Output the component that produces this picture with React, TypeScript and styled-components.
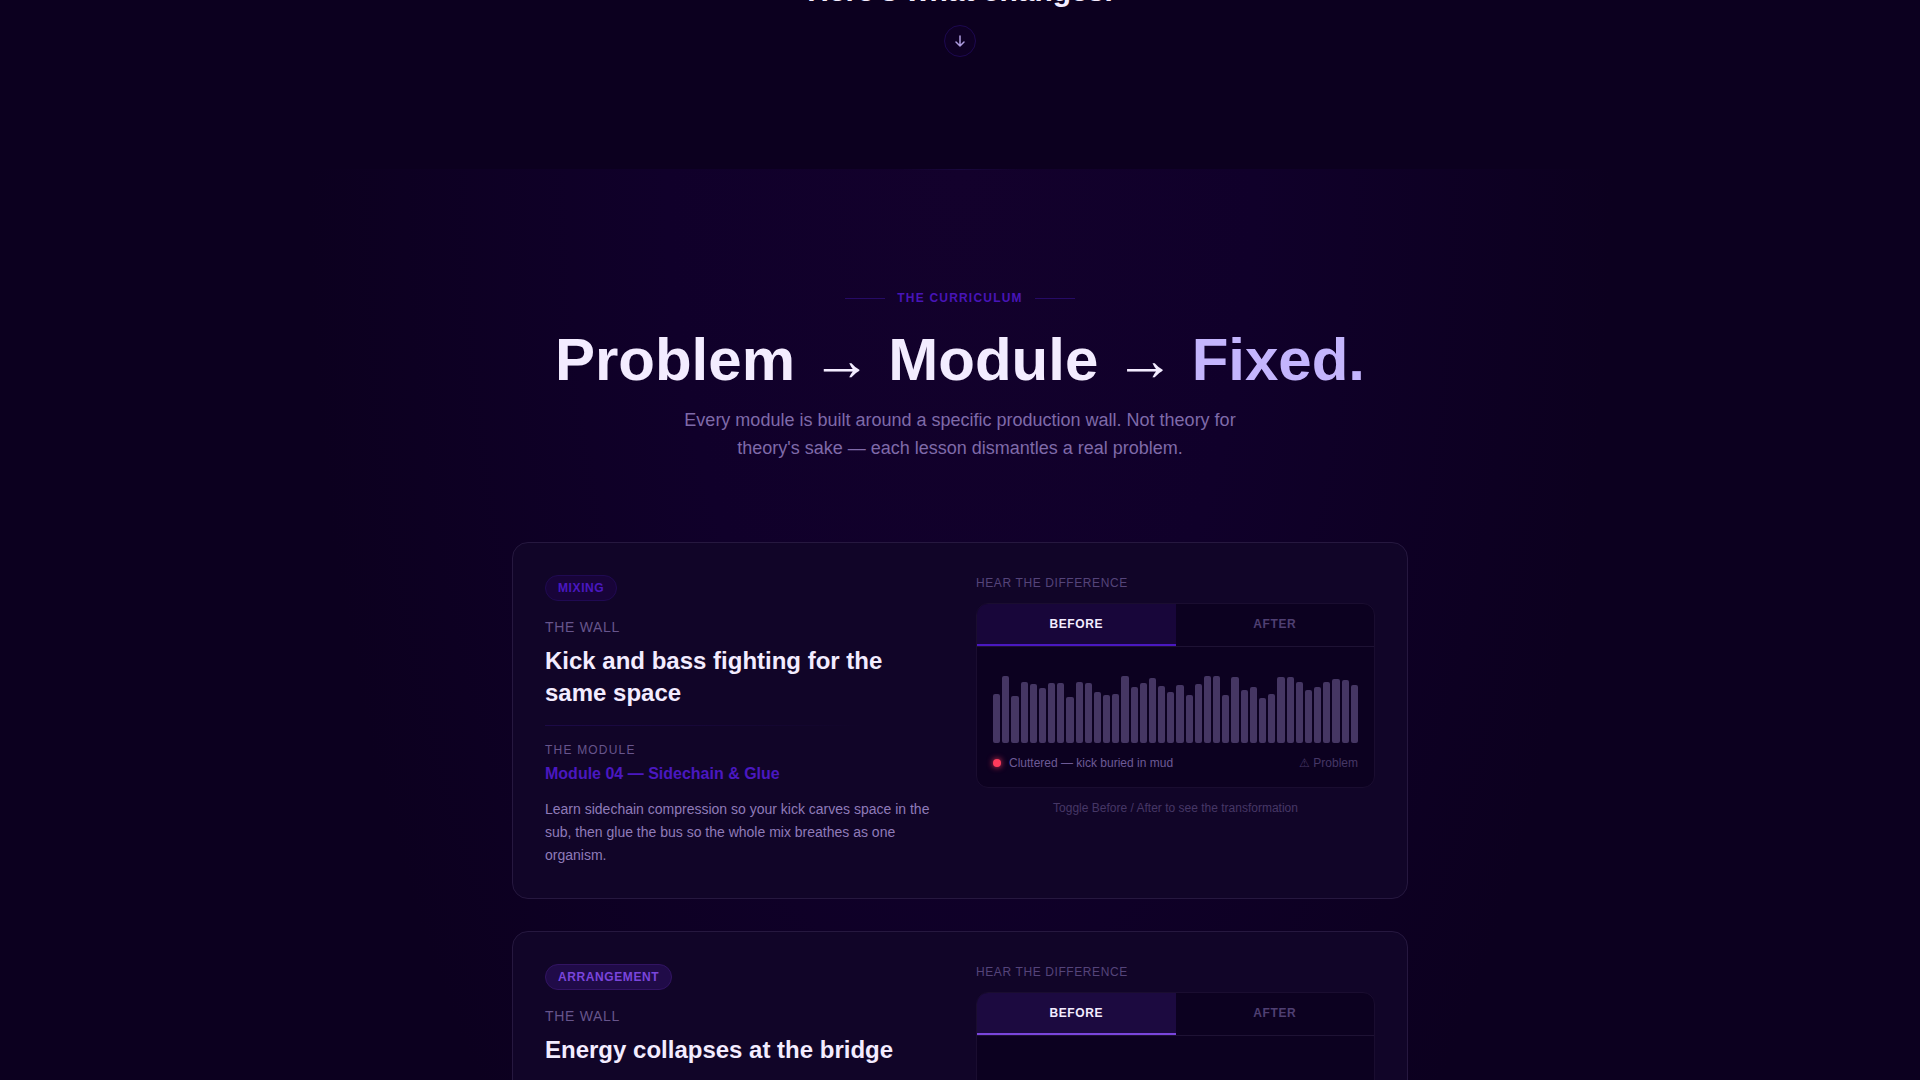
import React, { useState } from "react";
import styled, { createGlobalStyle, css } from "styled-components";

const GlobalStyle = createGlobalStyle`
  *, *::before, *::after { box-sizing: border-box; }
  body {
    margin: 0;
    background: #0c001f;
    color: #f3ecff;
    font-family: "Liberation Sans", Arial, sans-serif;
  }
  h1, h2, h3, p { margin: 0; }
  button { font-family: inherit; }
`;

const Page = styled.main`
  height: 100vh;
  overflow: hidden;
`;

const Intro = styled.section`
  display: flex;
  flex-direction: column;
  align-items: center;
  gap: 16px;
  padding-bottom: 112px;
`;

const IntroTitle = styled.h2`
  margin-top: -27px;
  font-size: 30px;
  line-height: 36px;
  font-weight: 700;
`;

const ScrollButton = styled.button`
  display: flex;
  align-items: center;
  justify-content: center;
  width: 32px;
  height: 32px;
  padding: 0;
  border: 1px solid #1d0850;
  border-radius: 50%;
  background: #0e0024;
  color: #ae9ce0;
`;

const Curriculum = styled.section`
  display: flex;
  flex-direction: column;
  align-items: center;
  padding: 0 24px 120px;
  background: radial-gradient(
    ellipse 34vw 1350px at 50% 0,
    #13012c 0%,
    #10002a 45%,
    #0c001f 100%
  );
`;

const TopRule = styled.div`
  width: 120px;
  height: 1px;
  background: linear-gradient(90deg, transparent, #1a083e, transparent);
`;

const Eyebrow = styled.p`
  display: flex;
  align-items: center;
  gap: 12px;
  margin-top: 120px;
  color: #4815b8;
  font-size: 12px;
  line-height: 16px;
  font-weight: 700;
  letter-spacing: 0.1em;

  &::before,
  &::after {
    content: "";
    width: 40px;
    height: 1px;
    background: #260b66;
  }
`;

const Headline = styled.h1`
  margin-top: 24px;
  font-size: 60px;
  line-height: 60px;
  font-weight: 700;
  text-align: center;
`;

const Highlight = styled.span`
  color: #c4b5fd;
`;

const Lead = styled.p`
  max-width: 576px;
  margin-top: 16px;
  color: #7f6aa9;
  font-size: 18px;
  line-height: 28px;
  text-align: center;
`;

const CardList = styled.div`
  display: flex;
  flex-direction: column;
  gap: 32px;
  width: 100%;
  max-width: 896px;
  margin-top: 80px;
`;

const Card = styled.article`
  display: grid;
  grid-template-columns: 1fr 1fr;
  gap: 32px;
  padding: 32px;
  border: 1px solid #26183f;
  border-radius: 16px;
  background: #110528;
`;

const Column = styled.div`
  display: flex;
  flex-direction: column;
  align-items: flex-start;
`;

type Tone = { accent: string; badge: string; badgeLine: string; tab: string };

const Badge = styled.span<{ $tone: Tone }>`
  padding: 4px 12px;
  border: 1px solid ${(p) => p.$tone.badgeLine};
  border-radius: 13px;
  background: ${(p) => p.$tone.badge};
  color: ${(p) => p.$tone.accent};
  font-size: 12px;
  line-height: 16px;
  font-weight: 700;
  letter-spacing: 0.05em;
`;

const WallLabel = styled.p`
  margin-top: 16px;
  color: #67558c;
  font-size: 14px;
  line-height: 20px;
  letter-spacing: 0.05em;
`;

const WallTitle = styled.h3`
  margin-top: 8px;
  font-size: 24px;
  line-height: 32px;
  font-weight: 700;
`;

const Divider = styled.div`
  width: 100%;
  height: 1px;
  margin: 16px 0;
  background: linear-gradient(90deg, #1c0a47, transparent 80%);
`;

const ModuleLabel = styled.p`
  color: #67558c;
  font-size: 12px;
  line-height: 16px;
  letter-spacing: 0.1em;
`;

const ModuleName = styled.p<{ $tone: Tone }>`
  margin-top: 4px;
  color: ${(p) => p.$tone.accent};
  font-size: 16px;
  line-height: 24px;
  font-weight: 700;
`;

const ModuleText = styled.p`
  margin-top: 12px;
  color: #8f7bb9;
  font-size: 14px;
  line-height: 1.625;
`;

const HearLabel = styled.p`
  color: #55447a;
  font-size: 12px;
  line-height: 16px;
  letter-spacing: 0.05em;
`;

const Player = styled.div`
  width: 100%;
  margin-top: 12px;
  border: 1px solid #1a0d30;
  border-radius: 12px;
  background: #0c0120;
  overflow: hidden;
`;

const Tabs = styled.div`
  display: grid;
  grid-template-columns: 1fr 1fr;
  border-bottom: 1px solid #1e1234;
`;

const Tab = styled.button<{ $tone: Tone; $active: boolean }>`
  padding: 12px;
  border: 0;
  border-bottom: 2px solid transparent;
  background: transparent;
  color: #4f3f72;
  font-size: 12px;
  line-height: 16px;
  font-weight: 700;
  letter-spacing: 0.05em;

  ${(p) =>
    p.$active &&
    css`
      border-bottom-color: ${p.$tone.accent};
      background: ${p.$tone.tab};
      color: #f3ecff;
    `}
`;

const PlayerBody = styled.div`
  padding: 16px;
`;

const Wave = styled.div`
  display: flex;
  align-items: flex-end;
  gap: 2px;
  height: 80px;
`;

const Bar = styled.span`
  flex: 1;
  border-radius: 2px;
  background: #453663;
`;

const Status = styled.div`
  display: flex;
  align-items: center;
  gap: 8px;
  margin-top: 12px;
  color: #6d5a96;
  font-size: 12px;
  line-height: 16px;
`;

const Dot = styled.span`
  width: 8px;
  height: 8px;
  border-radius: 50%;
  background: #ff3b5c;
  box-shadow: 0 0 6px #ff3b5c;
`;

const Verdict = styled.span`
  margin-left: auto;
  color: #463766;
`;

const Hint = styled.p`
  align-self: center;
  margin-top: 12px;
  color: #463766;
  font-size: 12px;
  line-height: 16px;
`;

type Module = {
  tag: string;
  wall: string;
  name?: string;
  text?: string;
  status?: string;
  levels: number[];
  tone: Tone;
};

const modules: Module[] = [
  {
    tag: "MIXING",
    wall: "Kick and bass fighting for the same space",
    name: "Module 04 — Sidechain & Glue",
    text: "Learn sidechain compression so your kick carves space in the sub, then glue the bus so the whole mix breathes as one organism.",
    status: "Cluttered — kick buried in mud",
    levels: [
      49, 67, 47, 61, 59, 55, 60, 60, 46, 61, 60, 51, 48, 49, 67, 56, 60, 65, 57, 51,
      58, 48, 59, 67, 67, 48, 66, 53, 56, 45, 49, 66, 66, 61, 53, 56, 61, 64, 63, 58,
    ],
    tone: { accent: "#4a18c0", badge: "#180439", badgeLine: "#200a52", tab: "#18063a" },
  },
  {
    tag: "ARRANGEMENT",
    wall: "Energy collapses at the bridge",
    levels: Array.from({ length: 40 }, (_, i) => 24 + ((i * 7) % 5)),
    tone: { accent: "#7a45dc", badge: "#200b48", badgeLine: "#321463", tab: "#1c0a40" },
  },
];

function ModuleCard({ tag, wall, name, text, status, levels, tone }: Module) {
  const [view, setView] = useState<"before" | "after">("before");
  return (
    <Card>
      <Column>
        <Badge $tone={tone}>{tag}</Badge>
        <WallLabel>THE WALL</WallLabel>
        <WallTitle>{wall}</WallTitle>
        {name && (
          <>
            <Divider />
            <ModuleLabel>THE MODULE</ModuleLabel>
            <ModuleName $tone={tone}>{name}</ModuleName>
            <ModuleText>{text}</ModuleText>
          </>
        )}
      </Column>
      <Column>
        <HearLabel>HEAR THE DIFFERENCE</HearLabel>
        <Player>
          <Tabs role="tablist">
            <Tab
              type="button"
              role="tab"
              aria-selected={view === "before"}
              $tone={tone}
              $active={view === "before"}
              onClick={() => setView("before")}
            >
              BEFORE
            </Tab>
            <Tab
              type="button"
              role="tab"
              aria-selected={view === "after"}
              $tone={tone}
              $active={view === "after"}
              onClick={() => setView("after")}
            >
              AFTER
            </Tab>
          </Tabs>
          <PlayerBody>
            <Wave>
              {levels.map((level, i) => (
                <Bar key={i} style={{ height: level }} />
              ))}
            </Wave>
            {status && (
              <Status>
                <Dot />
                <span>{status}</span>
                <Verdict>⚠ Problem</Verdict>
              </Status>
            )}
          </PlayerBody>
        </Player>
        {status && <Hint>Toggle Before / After to see the transformation</Hint>}
      </Column>
    </Card>
  );
}

export default function App() {
  return (
    <>
      <GlobalStyle />
      <Page>
        <Intro>
          <IntroTitle>Here's what changes.</IntroTitle>
          <ScrollButton type="button" aria-label="Scroll down">
            <svg
              width="14"
              height="14"
              viewBox="0 0 14 14"
              fill="none"
              stroke="currentColor"
              strokeWidth="1.5"
              strokeLinecap="round"
              strokeLinejoin="round"
            >
              <path d="M7 2v10M3 8l4 4 4-4" />
            </svg>
          </ScrollButton>
        </Intro>
        <Curriculum>
          <TopRule />
          <Eyebrow>THE CURRICULUM</Eyebrow>
          <Headline>
            Problem → Module → <Highlight>Fixed.</Highlight>
          </Headline>
          <Lead>
            Every module is built around a specific production wall. Not theory for theory's sake —
            each lesson dismantles a real problem.
          </Lead>
          <CardList>
            {modules.map((m) => (
              <ModuleCard key={m.tag} {...m} />
            ))}
          </CardList>
        </Curriculum>
      </Page>
    </>
  );
}
